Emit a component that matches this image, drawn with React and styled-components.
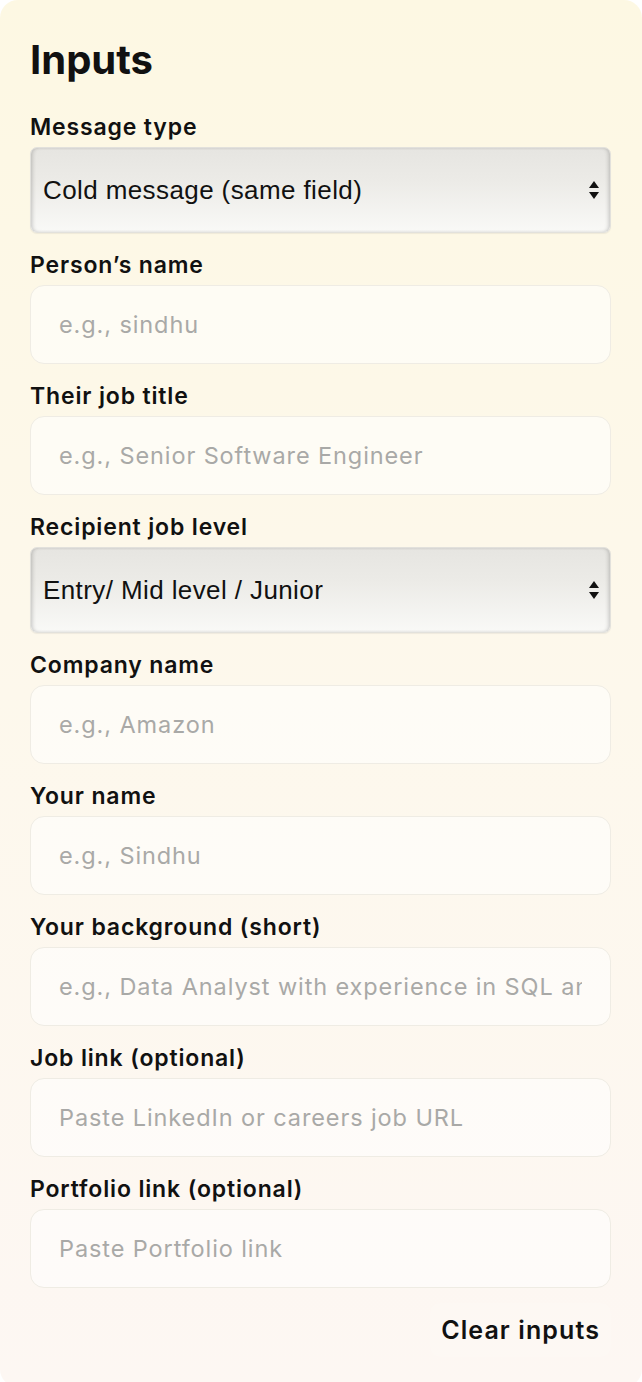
import React from "react";
import styled, { createGlobalStyle } from "styled-components";

const GlobalStyle = createGlobalStyle`
  html, body {
    margin: 0;
    padding: 0;
    background: #ffffff;
  }
  * { box-sizing: border-box; }
`;

const Panel = styled.section`
  width: 642px;
  min-height: 1382px;
  border-radius: 18px;
  padding: 30px 31px 30px 30px;
  background: linear-gradient(180deg, #fdf8e3 0%, #fdf8ec 50%, #fdf7f3 100%);
  font-family: Inter, "Noto Sans", sans-serif;
  color: #111;
  display: flex;
  flex-direction: column;
`;

const Title = styled.h2`
  margin: 6px 0 32px;
  font-size: 40px;
  font-weight: 700;
  line-height: 48px;
`;

const Field = styled.div`
  display: flex;
  flex-direction: column;
  gap: 9px;
  margin-bottom: 21px;
`;

const Label = styled.label`
  font-size: 23px;
  font-weight: 600;
  line-height: 22px;
  letter-spacing: 0.85px;
`;

const TextInput = styled.input`
  height: 79px;
  width: 100%;
  border: 1.5px solid #efece4;
  border-radius: 14px;
  background: rgba(255, 255, 255, 0.55);
  padding: 0 28px;
  font-family: Inter, "Noto Sans", sans-serif;
  font-size: 23.5px;
  letter-spacing: 0.9px;
  color: #222;
  outline: none;

  &::placeholder {
    color: #a9a9a7;
  }
`;

const SelectWrap = styled.div`
  position: relative;
  height: 86px;
  border-radius: 7px;
  background: linear-gradient(180deg, #e6e5e1 0%, #ecebe7 40%, #f9f9f7 100%);
  box-shadow: inset 3px 0 4px -2px rgba(0, 0, 0, 0.22),
    inset -3px 0 4px -2px rgba(0, 0, 0, 0.22),
    0 1px 1px rgba(0, 0, 0, 0.06);
  border: 1px solid #e2e1dc;
`;

const Select = styled.select`
  appearance: none;
  -webkit-appearance: none;
  width: 100%;
  height: 100%;
  border: none;
  background: transparent;
  padding: 0 40px 0 12px;
  font-family: "Liberation Sans", Arial, sans-serif;
  font-size: 26px;
  letter-spacing: 0.4px;
  color: #111;
  outline: none;
`;

const Arrows = styled.svg`
  position: absolute;
  right: 10px;
  top: 50%;
  transform: translateY(-50%);
  pointer-events: none;
`;

const Footer = styled.div`
  display: flex;
  justify-content: flex-end;
  margin-top: -6px;
`;

const ClearButton = styled.button`
  border: none;
  background: rgba(255, 255, 255, 0.12);
  border-radius: 10px;
  padding: 12px 11px;
  font-family: Inter, "Noto Sans", sans-serif;
  font-size: 25px;
  line-height: 30px;
  letter-spacing: 1.1px;
  font-weight: 600;
  color: #111;
  cursor: pointer;
`;

const SelectField = ({ label, value, options }) => (
  <Field>
    <Label>{label}</Label>
    <SelectWrap>
      <Select defaultValue={value}>
        {options.map((o) => (
          <option key={o}>{o}</option>
        ))}
      </Select>
      <Arrows width="12" height="20" viewBox="0 0 12 20">
        <path d="M6 1 L11 8 L1 8 Z" fill="#111" />
        <path d="M6 19 L11 12 L1 12 Z" fill="#111" />
      </Arrows>
    </SelectWrap>
  </Field>
);

const InputField = ({ label, placeholder }) => (
  <Field>
    <Label>{label}</Label>
    <TextInput placeholder={placeholder} />
  </Field>
);

export default function App() {
  return (
    <>
      <GlobalStyle />
      <Panel>
        <Title>Inputs</Title>
        <SelectField
          label="Message type"
          value="Cold message (same field)"
          options={["Cold message (same field)", "Referral request", "Follow-up"]}
        />
        <InputField label="Person’s name" placeholder="e.g., sindhu" />
        <InputField label="Their job title" placeholder="e.g., Senior Software Engineer" />
        <SelectField
          label="Recipient job level"
          value="Entry/ Mid level / Junior"
          options={["Entry/ Mid level / Junior", "Senior", "Manager / Director"]}
        />
        <InputField label="Company name" placeholder="e.g., Amazon" />
        <InputField label="Your name" placeholder="e.g., Sindhu" />
        <InputField
          label="Your background (short)"
          placeholder="e.g., Data Analyst with experience in SQL and Python"
        />
        <InputField label="Job link (optional)" placeholder="Paste LinkedIn or careers job URL" />
        <InputField label="Portfolio link (optional)" placeholder="Paste Portfolio link" />
        <Footer>
          <ClearButton type="button">Clear inputs</ClearButton>
        </Footer>
      </Panel>
    </>
  );
}
